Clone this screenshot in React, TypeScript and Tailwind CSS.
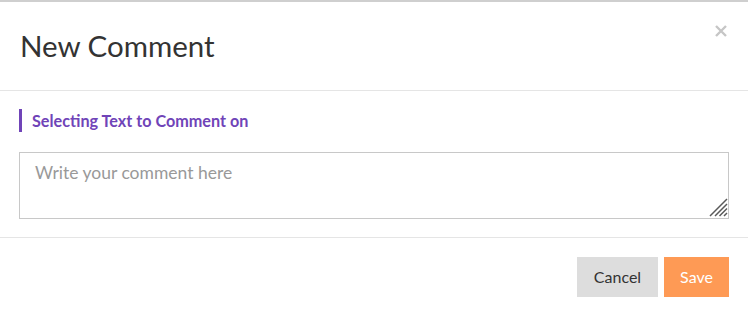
import React from "react";

export default function App() {
  return (
    <div className="w-[748px] h-[316px] bg-white overflow-hidden relative" style={{ fontFamily: "Lato, 'Noto Sans', sans-serif" }}>
      <div className="h-[2px] bg-[#cfcfcf]" />
      <div className="h-[89px] border-b border-[#e5e5e5] flex items-start justify-between pl-[20px] pr-[21px]">
        <h1 className="text-[29.5px] leading-[34px] text-[#333] mt-[27px] font-normal">New Comment</h1>
        <button className="mt-[23px] w-[12px] h-[12px]">
          <svg width="12" height="12" viewBox="0 0 12 12">
            <path d="M1 1 L11 11 M11 1 L1 11" stroke="#c6c6c6" strokeWidth="2.4" strokeLinecap="butt" />
          </svg>
        </button>
      </div>
      <div className="h-[147px] border-b border-[#e5e5e5] px-[19px] pt-[18px]">
        <div className="border-l-[3px] border-[#7044b8] pl-[10px] h-[23px] flex items-center">
          <span className="text-[16.2px] font-bold text-[#7044b8] leading-[20px]">Selecting Text to Comment on</span>
        </div>
        <div className="relative mt-[20px] w-[710px] h-[67px]">
          <textarea
            className="block w-full h-full resize-none border border-[#c8c8c8] px-[15px] pt-[7px] pb-[8px] text-[17.5px] text-[#333] placeholder:text-[#999] outline-none"
            placeholder="Write your comment here"
          />
          <svg className="absolute right-[1px] bottom-[2px]" width="19" height="19" viewBox="0 0 19 19">
            <path d="M18 1 L1 18 M18 6 L6 18 M18 10.5 L10.5 18 M18 15 L15 18" stroke="#5a5a5a" strokeWidth="1.5" />
          </svg>
        </div>
      </div>
      <div className="flex justify-end gap-[6px] pr-[19px] pt-[19px]">
        <button className="w-[81px] h-[40px] bg-[#dddddd] text-[#333] text-[16px]">Cancel</button>
        <button className="w-[65px] h-[40px] bg-[#fe9a55] text-white text-[16px]">Save</button>
      </div>
    </div>
  );
}
